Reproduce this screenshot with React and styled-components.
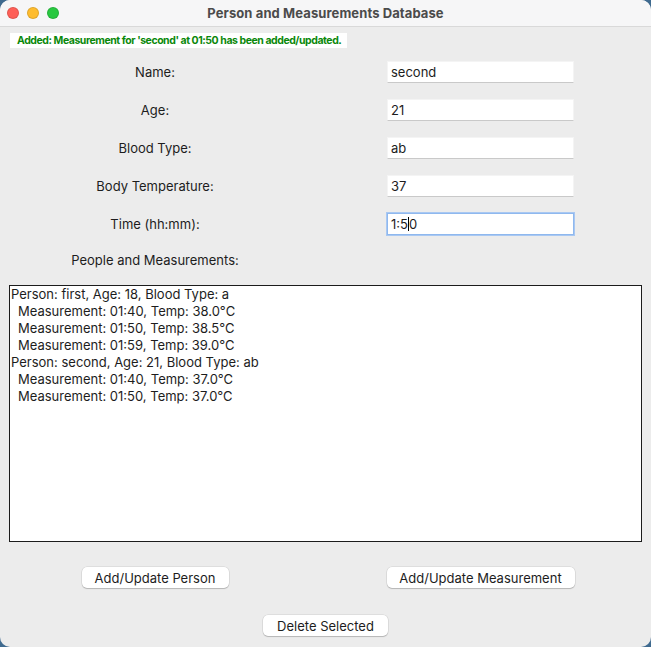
import React from "react";
import styled, { createGlobalStyle } from "styled-components";

const Global = createGlobalStyle`
  html, body { margin: 0; padding: 0; background: #3f6a8f; }
  #root { width: 651px; height: 647px; }
  * { box-sizing: border-box; }
`;

const FONT = `"Inter", "Liberation Sans", "Noto Sans", sans-serif`;

const Window = styled.div`
  width: 651px;
  height: 647px;
  border-radius: 10px;
  overflow: hidden;
  display: flex;
  flex-direction: column;
  background: #ececec;
  font-family: ${FONT};
  color: #1d1d1d;
`;

const TitleBar = styled.div`
  height: 27px;
  flex: none;
  display: grid;
  grid-template-columns: 1fr auto 1fr;
  align-items: center;
  background: #f6f6f7;
  border-bottom: 1px solid #d9d9d9;
  padding: 0 7px;
`;

const Lights = styled.div`
  display: flex;
  gap: 8px;
`;

const Light = styled.span`
  width: 12px;
  height: 12px;
  border-radius: 50%;
  background: ${(p) => p.$c};
  border: 0.5px solid rgba(0, 0, 0, 0.12);
`;

const Title = styled.div`
  font-size: 13px;
  font-weight: 700;
  color: #4b4b4b;
  letter-spacing: 0.1px;
`;

const Body = styled.div`
  flex: 1;
  display: flex;
  flex-direction: column;
  padding: 6px 9px 0 9px;
`;

const Status = styled.div`
  align-self: flex-start;
  margin-left: 1px;
  height: 15px;
  width: 337px;
  background: #fff;
  color: #0a880a;
  font-size: 10.5px;
  font-weight: 700;
  letter-spacing: -0.45px;
  line-height: 15px;
  padding-left: 7px;
  white-space: nowrap;
`;

const Form = styled.div`
  display: grid;
  grid-template-columns: 310px 1fr;
  grid-auto-rows: 38px;
  margin: 5px -9px 0 -9px;
`;

const Label = styled.div`
  display: flex;
  align-items: center;
  justify-content: center;
  font-size: 13px;
`;

const Cell = styled.div`
  display: flex;
  align-items: center;
  justify-content: center;
`;

const Entry = styled.div`
  width: 187px;
  height: 22px;
  background: #fff;
  font-size: 13px;
  line-height: 20px;
  padding: 0 3px;
  border: 1px solid ${(p) => (p.$focus ? "#8fb8ee" : "#f4f4f4")};
  border-bottom-color: ${(p) => (p.$focus ? "#8fb8ee" : "#c9c9c9")};
  box-shadow: ${(p) => (p.$focus ? "0 0 0 1px #a9c8f2" : "none")};
`;

const Caret = styled.span`
  display: inline-block;
  width: 1px;
  height: 14px;
  background: #000;
  vertical-align: -2px;
`;

const PeopleLabel = styled(Label)`
  width: 310px;
  height: 34px;
  margin-left: -9px;
`;

const ListBox = styled.div`
  margin-top: 8px;
  height: 257px;
  background: #fff;
  border: 1px solid #1c1c1c;
  padding: 0 1px;
  font-size: 13px;
  line-height: 17px;
`;

const Line = styled.div`
  padding-left: ${(p) => (p.$indent ? "7px" : "0")};
  white-space: pre;
`;

const Buttons = styled.div`
  display: grid;
  grid-template-columns: 310px 1fr;
  grid-auto-rows: 48px;
  margin: 25px -9px 0 -9px;
`;

const BtnCell = styled.div`
  display: flex;
  justify-content: center;
  align-items: flex-start;
  grid-column: ${(p) => p.$span || "auto"};
`;

const Button = styled.button`
  height: 21px;
  width: ${(p) => p.$w}px;
  background: #fff;
  border: none;
  border-radius: 5px;
  box-shadow: 0 0 0 0.5px rgba(0, 0, 0, 0.12), 0 1px 1px rgba(0, 0, 0, 0.18);
  font-family: ${FONT};
  font-size: 13px;
  color: #1d1d1d;
  padding: 0;
`;

const fields = [
  { label: "Name:", value: "second" },
  { label: "Age:", value: "21" },
  { label: "Blood Type:", value: "ab" },
  { label: "Body Temperature:", value: "37" },
];

const lines = [
  ["Person: first, Age: 18, Blood Type: a", false],
  ["Measurement: 01:40, Temp: 38.0°C", true],
  ["Measurement: 01:50, Temp: 38.5°C", true],
  ["Measurement: 01:59, Temp: 39.0°C", true],
  ["Person: second, Age: 21, Blood Type: ab", false],
  ["Measurement: 01:40, Temp: 37.0°C", true],
  ["Measurement: 01:50, Temp: 37.0°C", true],
];

export default function App() {
  return (
    <>
      <Global />
      <Window>
        <TitleBar>
          <Lights>
            <Light $c="#fe5f57" />
            <Light $c="#febc2e" />
            <Light $c="#28c840" />
          </Lights>
          <Title>Person and Measurements Database</Title>
          <div />
        </TitleBar>
        <Body>
          <Status>Added: Measurement for 'second' at 01:50 has been added/updated.</Status>
          <Form>
            {fields.map((f) => (
              <React.Fragment key={f.label}>
                <Label>{f.label}</Label>
                <Cell>
                  <Entry>{f.value}</Entry>
                </Cell>
              </React.Fragment>
            ))}
            <Label>Time (hh:mm):</Label>
            <Cell>
              <Entry $focus>
                1:5<Caret />0
              </Entry>
            </Cell>
          </Form>
          <PeopleLabel>People and Measurements:</PeopleLabel>
          <ListBox>
            {lines.map(([t, ind], i) => (
              <Line key={i} $indent={ind}>
                {t}
              </Line>
            ))}
          </ListBox>
          <Buttons>
            <BtnCell>
              <Button $w={147}>Add/Update Person</Button>
            </BtnCell>
            <BtnCell>
              <Button $w={188}>Add/Update Measurement</Button>
            </BtnCell>
            <BtnCell $span="1 / span 2">
              <Button $w={125}>Delete Selected</Button>
            </BtnCell>
          </Buttons>
        </Body>
      </Window>
    </>
  );
}
